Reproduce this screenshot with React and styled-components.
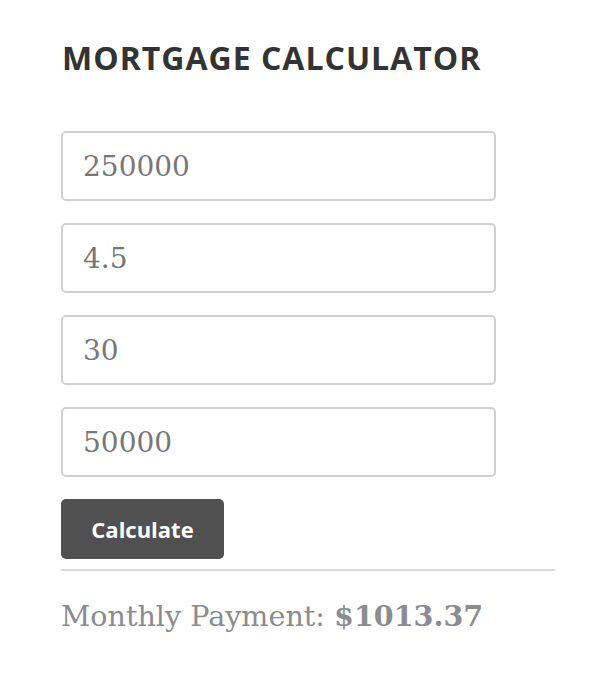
import React, { useState } from "react";
import styled, { createGlobalStyle } from "styled-components";

const GlobalStyle = createGlobalStyle`
  body {
    margin: 0;
    background: #fff;
  }
`;

const App = () => {
  const [amount, setAmount] = useState("250000");
  const [rate, setRate] = useState("4.5");
  const [years, setYears] = useState("30");
  const [down, setDown] = useState("50000");
  const [payment, setPayment] = useState("1013.37");

  const onCalculate = () => {
    const p = parseFloat(amount) - parseFloat(down);
    const r = parseFloat(rate) / 100 / 12;
    const n = parseFloat(years) * 12;
    if (!p || !n) return;
    const m = r ? (p * r) / (1 - Math.pow(1 + r, -n)) : p / n;
    setPayment(m.toFixed(2));
  };

  return (
    <>
      <GlobalStyle />
      <Container>
        <Title>Mortgage Calculator</Title>
        <Form>
          <Input value={amount} onChange={(e) => setAmount(e.target.value)} />
          <Input value={rate} onChange={(e) => setRate(e.target.value)} />
          <Input value={years} onChange={(e) => setYears(e.target.value)} />
          <Input value={down} onChange={(e) => setDown(e.target.value)} />
        </Form>
        <Button onClick={() => onCalculate()}>Calculate</Button>
        <Divider />
        <Result>
          Monthly Payment: <strong>${payment}</strong>
        </Result>
      </Container>
    </>
  );
};

export default App;

const Container = styled.div`
  padding: 38px 45px 0 61px;
  width: 494px;
`;
const Title = styled.h2`
  margin: 0 0 0 1px;
  font-family: "Open Sans", sans-serif;
  font-weight: 700;
  font-size: 32px;
  line-height: 40px;
  letter-spacing: 1px;
  text-transform: uppercase;
  color: #333;
`;
const Form = styled.div`
  display: flex;
  flex-direction: column;
  gap: 22px;
  margin-top: 53px;
  width: 435px;
`;
const Input = styled.input`
  box-sizing: border-box;
  height: 70px;
  width: 100%;
  padding: 0 20px;
  border: 2px solid #d0d0d0;
  border-radius: 5px;
  font-family: "DejaVu Serif", serif;
  font-size: 28px;
  color: #777;
  outline: none;
`;
const Button = styled.button`
  margin-top: 22px;
  width: 163px;
  height: 60px;
  border: none;
  border-radius: 5px;
  background-color: #505050;
  color: #fff;
  font-family: "Open Sans", sans-serif;
  font-weight: 700;
  font-size: 22px;
  cursor: pointer;
`;
const Divider = styled.hr`
  margin: 10px 0 0;
  border: none;
  border-top: 2px solid #d8dbde;
`;
const Result = styled.p`
  margin: 28px 0 0;
  font-family: "DejaVu Serif", serif;
  font-size: 28.6px;
  color: #8a8c90;
  strong {
    font-weight: 700;
  }
`;
